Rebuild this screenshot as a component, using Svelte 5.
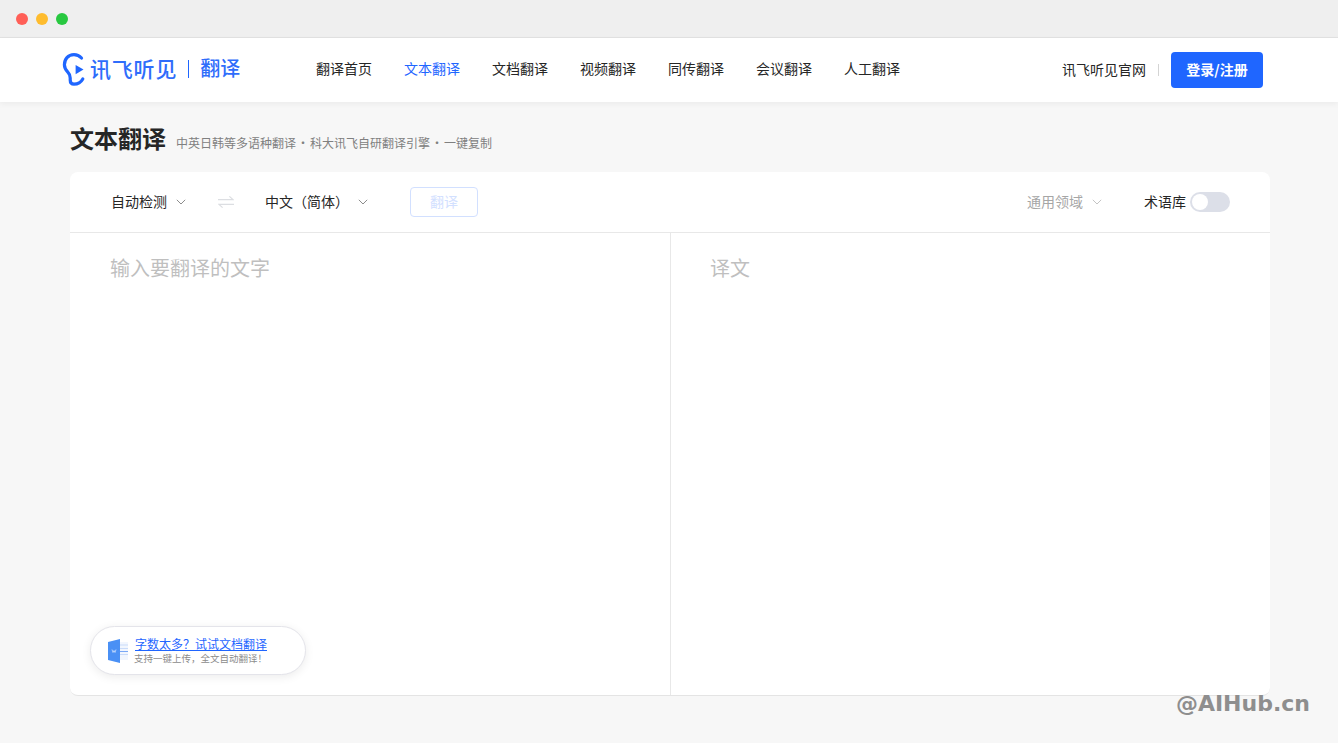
<script>
	const navItems = ['翻译首页', '文本翻译', '文档翻译', '视频翻译', '同传翻译', '会议翻译', '人工翻译'];
	const activeNav = '文本翻译';
</script>

{#snippet chevron()}
	<svg class="chevron" width="10" height="6" viewBox="0 0 10 6">
		<path d="M0.8 0.8 L5 5 L9.2 0.8" fill="none" stroke="currentColor" stroke-width="1" />
	</svg>
{/snippet}

<div class="titlebar">
	<span class="dot red"></span>
	<span class="dot yellow"></span>
	<span class="dot green"></span>
</div>

<header class="nav">
	<div class="brand">
		<svg class="ear" width="23" height="33" viewBox="0 0 23 33">
			<path d="M19.5 5 C17.5 2.8 15 1.6 12 1.6 C6 1.6 2.4 6.2 2.4 11.8 C2.4 15.4 4.2 17.6 6 19.4 C7.6 21 8.2 22.4 8.2 25 L8.2 27 C8.2 29.6 9.8 31.2 12 31.2 C15.6 31.2 18.8 29.6 20.8 26" fill="none" stroke="#1f66ff" stroke-width="3.2" stroke-linecap="round" />
			<path d="M13.6 12 L21.5 16.6 L13.6 21.2 Z" fill="#1f66ff" />
		</svg>
		<span class="brand-name">讯飞听见</span>
		<span class="brand-line"></span>
		<span class="brand-sub">翻译</span>
	</div>
	<nav class="links">
		{#each navItems as item}
			<a href="#top" class:active={item === activeNav}>{item}</a>
		{/each}
	</nav>
	<div class="nav-right">
		<a class="site" href="#top">讯飞听见官网</a>
		<span class="sep"></span>
		<button class="login">登录/注册</button>
	</div>
</header>

<main class="page">
	<div class="heading">
		<h1>文本翻译</h1>
		<p>中英日韩等多语种翻译<span class="mid">・</span>科大讯飞自研翻译引擎<span class="mid">・</span>一键复制</p>
	</div>

	<section class="card">
		<div class="toolbar">
			<div class="lang"><span class="label">自动检测</span> {@render chevron()}</div>
			<svg class="swap" width="16" height="12" viewBox="0 0 16 12">
				<path d="M0 3.6 H15 L11.4 0.4 M16 8.4 H1 L4.6 11.6" fill="none" stroke="#dcdee2" stroke-width="1.2" />
			</svg>
			<div class="lang"><span class="label">中文（简体）</span> {@render chevron()}</div>
			<button class="translate">翻译</button>
			<div class="domain"><span class="label">通用领域</span> {@render chevron()}</div>
			<div class="terms">
				<span class="label">术语库</span>
				<span class="switch"><span class="knob"></span></span>
			</div>
		</div>
		<div class="panes">
			<div class="pane source">
				<div class="placeholder">输入要翻译的文字</div>
				<div class="tip">
					<svg width="20" height="24" viewBox="0 0 20 24">
						<rect x="12" y="3" width="8" height="18" fill="#f1f6fe" />
						<path d="M12 6 H20 M12 9.5 H20 M12 15.5 H20" stroke="#c9dbfa" stroke-width="1" />
						<path d="M12 12.5 H20" stroke="#7aa8f6" stroke-width="1" />
						<path d="M0 3 L12 0 V24 L0 21 Z" fill="#4a90f5" />
						<path d="M4 10.5 L5 13.5 L6 11.5 L7 13.5 L8 10.5" fill="none" stroke="#dbe8fd" stroke-width="0.7" />
					</svg>
					<div class="tip-text">
						<a href="#top">字数太多？试试文档翻译</a>
						<span>支持一键上传，全文自动翻译！</span>
					</div>
				</div>
			</div>
			<div class="pane target">
				<div class="placeholder">译文</div>
			</div>
		</div>
	</section>
</main>

<div class="watermark">@AIHub.cn</div>

<style>
	:global(body) {
		margin: 0;
		background: #f7f7f7;
		font-family: "Noto Sans CJK SC", "Noto Sans", sans-serif;
		overflow: hidden;
	}

	.titlebar {
		display: flex;
		align-items: center;
		gap: 8px;
		height: 37px;
		padding: 0 16px;
		background: #efefef;
		border-bottom: 1px solid #e2e2e2;
	}
	.dot {
		width: 12px;
		height: 12px;
		border-radius: 50%;
	}
	.red { background: #ff5f57; }
	.yellow { background: #febc2e; }
	.green { background: #28c840; }

	.nav {
		position: relative;
		display: flex;
		align-items: center;
		height: 64px;
		padding: 0 75px 0 62px;
		background: #fff;
		box-shadow: 0 2px 6px rgba(0, 0, 0, 0.05);
	}
	.brand {
		display: flex;
		align-items: center;
		width: 254px;
		padding-bottom: 2px;
		box-sizing: border-box;
	}
	.ear {
		flex: none;
		margin-right: 5px;
	}
	.brand-name {
		font-size: 21px;
		line-height: 28px;
		font-weight: 500;
		color: #2f6dfb;
		letter-spacing: 0.8px;
		padding-bottom: 2px;
	}
	.brand-line {
		width: 1px;
		height: 18px;
		margin: 0 11px;
		background: #1f66ff;
	}
	.brand-sub {
		font-size: 20px;
		line-height: 28px;
		font-weight: 500;
		color: #2f6dfb;
		padding-bottom: 2px;
	}
	.links {
		display: flex;
		gap: 32px;
		padding-bottom: 4px;
	}
	.links a {
		font-size: 14px;
		line-height: 20px;
		color: #262626;
		text-decoration: none;
	}
	.links a.active {
		color: #1f66ff;
	}
	.nav-right {
		display: flex;
		align-items: center;
		margin-left: auto;
	}
	.site {
		font-size: 14px;
		color: #262626;
		text-decoration: none;
		padding-bottom: 2px;
	}
	.sep {
		width: 1px;
		height: 12px;
		margin: 0 12px;
		background: #d4d4d4;
	}
	.login {
		width: 92px;
		height: 36px;
		padding: 0 0 2px;
		border: 0;
		border-radius: 4px;
		background: #1f66ff;
		color: #fff;
		font-family: inherit;
		font-size: 14px;
		font-weight: 700;
	}

	.page {
		width: 1200px;
		margin-left: 70px;
	}
	.heading {
		display: flex;
		align-items: baseline;
		height: 70px;
		padding-top: 18px;
		box-sizing: border-box;
	}
	h1 {
		margin: 0 10px 0 0;
		font-size: 24px;
		line-height: 36px;
		font-weight: 700;
		color: #262626;
	}
	.heading p {
		margin: 0;
		font-size: 12px;
		color: #808080;
	}
	.mid {
		margin: 0 1px;
	}

	.card {
		height: 524px;
		display: flex;
		flex-direction: column;
		box-sizing: border-box;
		background: #fff;
		border-radius: 8px;
		border-bottom: 1px solid #e4e4e4;
	}
	.toolbar {
		display: flex;
		align-items: center;
		flex: none;
		height: 61px;
		box-sizing: border-box;
		padding: 0 40px 0 41px;
		border-bottom: 1px solid #e8e8e8;
		font-size: 14px;
		color: #262626;
	}
	.label {
		padding-bottom: 2px;
		white-space: nowrap;
	}
	.lang {
		display: flex;
		align-items: center;
	}
	.chevron {
		margin-left: 9px;
		color: #8c8c8c;
	}
	.swap {
		margin: 0 31px 0 32px;
	}
	.translate {
		width: 68px;
		height: 30px;
		margin-left: 42px;
		padding: 0 0 2px;
		box-sizing: border-box;
		border: 1px solid #d2e0ff;
		border-radius: 4px;
		background: #fff;
		color: #d2e0ff;
		font-family: inherit;
		font-size: 14px;
	}
	.domain {
		display: flex;
		align-items: center;
		margin-left: auto;
		color: #a6a6a6;
	}
	.domain .chevron {
		color: #c4c4c4;
	}
	.terms {
		display: flex;
		align-items: center;
		gap: 4px;
		margin-left: 42px;
	}
	.switch {
		display: block;
		width: 40px;
		height: 20px;
		padding: 2px;
		box-sizing: border-box;
		border-radius: 10px;
		background: #dcdfe8;
	}
	.knob {
		display: block;
		width: 16px;
		height: 16px;
		border-radius: 50%;
		background: #fff;
	}

	.panes {
		display: flex;
		flex: 1;
		min-height: 0;
	}
	.pane {
		position: relative;
		flex: 1;
		padding: 20px 40px;
	}
	.source {
		border-right: 1px solid #e8e8e8;
		flex: none;
		width: 601px;
		box-sizing: border-box;
	}
	.target {
		padding-left: 39px;
	}
	.placeholder {
		font-size: 20px;
		line-height: 30px;
		color: #bfbfbf;
	}
	.tip {
		position: absolute;
		left: 20px;
		bottom: 20px;
		display: flex;
		align-items: center;
		width: 216px;
		height: 49px;
		box-sizing: border-box;
		padding-left: 17px;
		background: #fff;
		border: 1px solid #e4e4ea;
		border-radius: 25px;
		box-shadow: 0 2px 10px rgba(0, 0, 0, 0.08);
	}
	.tip-text {
		display: flex;
		flex-direction: column;
		margin-left: 6px;
	}
	.tip-text a {
		margin-left: 1px;
		font-size: 12px;
		line-height: 15px;
		color: #1f66ff;
		text-decoration: underline;
	}
	.tip-text span {
		font-size: 9.5px;
		line-height: 15px;
		color: #8c8c8c;
		white-space: nowrap;
	}

	.watermark {
		position: absolute;
		right: 28px;
		top: 687px;
		font-family: "DejaVu Sans", sans-serif;
		font-size: 22px;
		line-height: 34px;
		font-weight: 700;
		color: #8e8e8e;
	}
</style>
